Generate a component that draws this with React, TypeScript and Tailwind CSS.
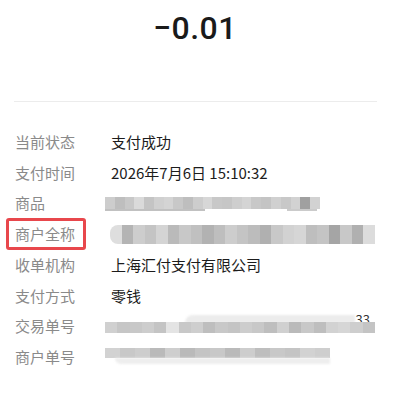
import React from "react";

const F = { fontFamily: '"Noto Sans CJK SC", "Noto Sans", sans-serif' };

function Pix({ w, h, grays, className = "" }: { w: number; h: number; grays: number[]; className?: string }) {
  return (
    <div className={"flex overflow-hidden " + className} style={{ width: w, height: h, filter: "blur(0.6px)" }}>
      {grays.map((g, i) => (
        <div key={i} className="flex-1" style={{ background: `rgb(${g},${g},${g})` }} />
      ))}
    </div>
  );
}

function Row({ label, children, boxed }: { label: string; children: React.ReactNode; boxed?: boolean }) {
  return (
    <div className="flex items-center h-[30.7px]">
      <div className="relative shrink-0 w-[111px] pl-[15px] text-[15px] text-[#8a8a8a]">
        {label}
        {boxed && (
          <div className="absolute left-[6px] top-[-5px] w-[80px] h-[32px] border-[3px] border-[#e8474c] rounded-[3px]" />
        )}
      </div>
      <div className="text-[15px] text-[#1c1c1c] relative">{children}</div>
    </div>
  );
}

export default function App() {
  return (
    <div className="w-[402px] h-[394px] bg-white" style={F}>
      <div className="h-[56px] flex justify-center pr-[12px] pt-[8px]">
        <div
          className="text-[32px] font-medium text-[#1a1a1a] leading-[40px] tracking-[0.5px]"
          style={{ fontFamily: "Roboto, sans-serif" }}
        >
          −0.01
        </div>
      </div>
      <div className="h-[46px] flex items-end">
        <div className="ml-[14px] w-[363px] h-px bg-[#ececec]" />
      </div>
      <div className="pt-[25px]">
        <Row label="当前状态">支付成功</Row>
        <Row label="支付时间">2026年7月6日 15:10:32</Row>
        <Row label="商品">
          <div className="-ml-[6px] mt-[1px]">
            <Pix w={215} h={12} grays={[205, 190, 200, 218, 196, 208, 212, 200, 190, 205, 215, 200, 198, 206, 212, 200, 196, 208, 200, 210, 160, 210]} />
            <div className="w-[215px] h-[2px] flex gap-[6px] opacity-60">
              <div className="w-[100px] bg-[#999]" />
              <div className="w-[70px]" />
              <div className="w-[30px] bg-[#aaa]" />
            </div>
          </div>
        </Row>
        <Row label="商户全称" boxed>
          <Pix
            className="-ml-[1px] rounded-l-[8px]"
            w={265}
            h={19}
            grays={[222, 180, 205, 196, 212, 186, 200, 192, 178, 190, 205, 196, 188, 176, 200, 210, 214, 190, 196, 165, 200, 176, 220]}
          />
        </Row>
        <Row label="收单机构">上海汇付支付有限公司</Row>
        <Row label="支付方式">零钱</Row>
        <Row label="交易单号">
          <div className="-ml-[6px] relative w-[270px] h-[20px]">
            <div className="absolute left-[80px] top-[-1px] w-[170px] h-[8px] bg-[#ececec] rounded-tl-[20px]" style={{ filter: "blur(1px)" }} />
            <div className="absolute right-[5px] top-[-4px] text-[13px] text-[#333] leading-[16px]">33</div>
            <div className="absolute left-0 top-[6px]">
              <Pix w={270} h={11} grays={[208, 198, 200, 205, 196, 228, 200, 206, 190, 200, 196, 205, 200, 190, 208, 186, 200, 190, 210, 214, 206, 196]} />
            </div>
          </div>
        </Row>
        <Row label="商户单号">
          <div className="-ml-[6px] relative w-[225px] h-[20px]">
            <div className="absolute left-0 top-[1px]">
              <Pix w={225} h={10} grays={[210, 200, 205, 186, 206, 186, 196, 200, 186, 205, 190, 200, 196, 210, 206]} />
            </div>
            <div className="absolute left-[10px] top-[11px] w-[215px] h-[6px] bg-[#eeeeee] rounded-bl-[20px]" style={{ filter: "blur(1px)" }} />
          </div>
        </Row>
      </div>
    </div>
  );
}
